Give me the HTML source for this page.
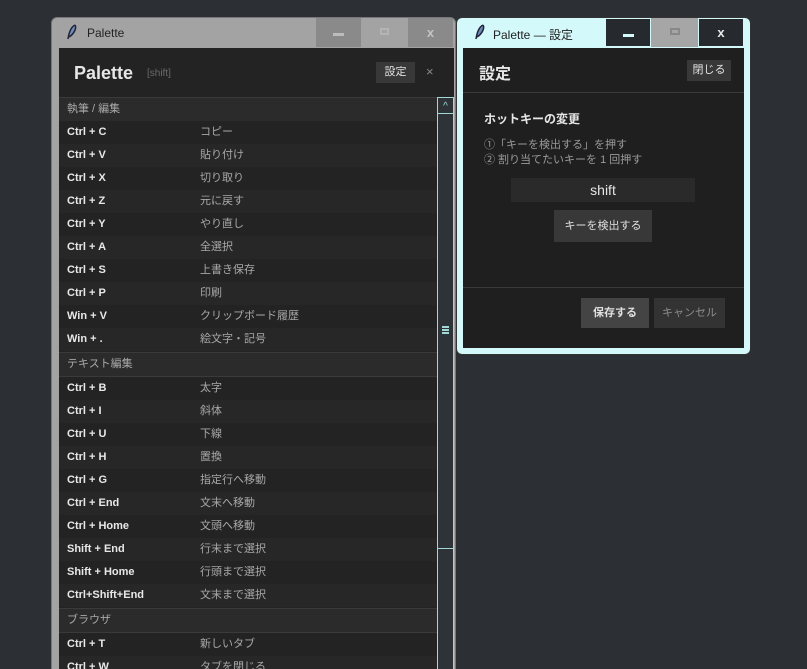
<!DOCTYPE html>
<html style="width:807px;height:669px;overflow:hidden"><head><meta charset="utf-8"><style>
*{box-sizing:border-box;margin:0;padding:0}
body{width:807px;height:669px;background:#2c3035;font-family:"Liberation Sans","Noto Sans CJK JP",sans-serif;position:relative;overflow:hidden}
.abs{position:absolute}
#lw{left:51px;top:17px;width:405px;height:660px;background:#a3a3a3;border:1px solid #777;border-radius:6px 6px 0 0;overflow:hidden}
.title{font-size:12px;color:#222;top:8px}
#lc{left:7px;top:30px;width:395px;height:640px;background:#232323}
.row{position:absolute;left:0;width:378px;height:23px;font-size:11px;line-height:23px}
.row .k{position:absolute;left:8px;color:#e8e8e8;font-weight:bold}
.row .d{position:absolute;left:141px;color:#a8a8a8}
.sec{position:absolute;left:0;width:378px;height:25px;background:#2b2b2b;border-top:1px solid #3a3a3a;border-bottom:1px solid #3a3a3a;font-size:11px;line-height:23px;color:#a8a8a8;padding-left:8px}
#rw{left:456px;top:17px;width:295px;height:338px;background:#d4f9fb;border-radius:6px;border:1px solid #333}
#rc{left:6px;top:30px;width:281px;height:300px;background:#1f1f1f}
.btn{position:absolute;background:#383838;color:#e0e0e0;font-size:11px;text-align:center}
</style></head><body>
<div id="lw" class="abs">
 <svg class="abs" style="left:14px;top:6px" width="12" height="17" viewBox="0 0 12 17"><path d="M9 1C5 3 3 8 2 15M9 1C11 4 8 10 3 13" stroke="#223" stroke-width="1.5" fill="#6a8cc0"/></svg>
 <div class="abs title" style="left:35px">Palette</div>
 <div class="abs" style="left:264px;top:0;width:45px;height:29px;background:#8a8a8a"><div class="abs" style="left:17px;top:15px;width:11px;height:3px;background:#bcbcbc"></div></div>
 <div class="abs" style="left:328px;top:10px;width:9px;height:7px;border:2px solid #b4b4b4"></div>
 <div class="abs" style="left:356px;top:0;width:45px;height:29px;background:#8a8a8a;color:#c4c4c4;font-weight:bold;font-size:13px;text-align:center;line-height:29px">x</div>
 <div id="lc" class="abs">
  <div class="abs" style="left:15px;top:15px;font-size:18px;font-weight:bold;color:#e6e6e6">Palette</div>
  <div class="abs" style="left:88px;top:20px;font-size:10px;color:#6a6a6a">[shift]</div>
  <div class="btn" style="left:317px;top:14px;width:39px;height:21px;line-height:21px">設定</div>
  <div class="abs" style="left:367px;top:16px;font-size:13px;color:#888">×</div>
  <div class="sec" style="top:49px">執筆 / 編集</div>
  <div class="row" style="top:73px;background:#232323"><span class="k">Ctrl + C</span><span class="d">コピー</span></div>
  <div class="row" style="top:96px;background:#272727"><span class="k">Ctrl + V</span><span class="d">貼り付け</span></div>
  <div class="row" style="top:119px;background:#232323"><span class="k">Ctrl + X</span><span class="d">切り取り</span></div>
  <div class="row" style="top:142px;background:#272727"><span class="k">Ctrl + Z</span><span class="d">元に戻す</span></div>
  <div class="row" style="top:165px;background:#232323"><span class="k">Ctrl + Y</span><span class="d">やり直し</span></div>
  <div class="row" style="top:188px;background:#272727"><span class="k">Ctrl + A</span><span class="d">全選択</span></div>
  <div class="row" style="top:211px;background:#232323"><span class="k">Ctrl + S</span><span class="d">上書き保存</span></div>
  <div class="row" style="top:234px;background:#272727"><span class="k">Ctrl + P</span><span class="d">印刷</span></div>
  <div class="row" style="top:257px;background:#232323"><span class="k">Win + V</span><span class="d">クリップボード履歴</span></div>
  <div class="row" style="top:280px;background:#272727"><span class="k">Win + .</span><span class="d">絵文字・記号</span></div>
  <div class="sec" style="top:304px">テキスト編集</div>
  <div class="row" style="top:329px;background:#232323"><span class="k">Ctrl + B</span><span class="d">太字</span></div>
  <div class="row" style="top:352px;background:#272727"><span class="k">Ctrl + I</span><span class="d">斜体</span></div>
  <div class="row" style="top:375px;background:#232323"><span class="k">Ctrl + U</span><span class="d">下線</span></div>
  <div class="row" style="top:398px;background:#272727"><span class="k">Ctrl + H</span><span class="d">置換</span></div>
  <div class="row" style="top:421px;background:#232323"><span class="k">Ctrl + G</span><span class="d">指定行へ移動</span></div>
  <div class="row" style="top:444px;background:#272727"><span class="k">Ctrl + End</span><span class="d">文末へ移動</span></div>
  <div class="row" style="top:467px;background:#232323"><span class="k">Ctrl + Home</span><span class="d">文頭へ移動</span></div>
  <div class="row" style="top:490px;background:#272727"><span class="k">Shift + End</span><span class="d">行末まで選択</span></div>
  <div class="row" style="top:513px;background:#232323"><span class="k">Shift + Home</span><span class="d">行頭まで選択</span></div>
  <div class="row" style="top:536px;background:#272727"><span class="k">Ctrl+Shift+End</span><span class="d">文末まで選択</span></div>
  <div class="sec" style="top:560px">ブラウザ</div>
  <div class="row" style="top:585px;background:#232323"><span class="k">Ctrl + T</span><span class="d">新しいタブ</span></div>
  <div class="row" style="top:608px;background:#272727"><span class="k">Ctrl + W</span><span class="d">タブを閉じる</span></div>
  <div class="abs" style="left:378px;top:49px;width:17px;height:600px;background:#2e3338;border:1px solid #9fd8d4">
   <div class="abs" style="left:0;top:0;width:15px;height:16px;border-bottom:1px solid #9fd8d4;color:#9fd8d4;font-size:10px;text-align:center;line-height:18px">^</div>
   <div class="abs" style="left:4px;top:228px;width:7px;height:2px;background:#9fd8d4;box-shadow:0 3px #9fd8d4,0 6px #9fd8d4"></div>
   <div class="abs" style="left:0;top:450px;width:15px;height:1px;background:#9fd8d4"></div>
  </div>
 </div>
</div>
<div id="rw" class="abs">
 <svg class="abs" style="left:17px;top:6px" width="12" height="17" viewBox="0 0 12 17"><path d="M9 1C5 3 3 8 2 15M9 1C11 4 8 10 3 13" stroke="#223" stroke-width="1.5" fill="#6a8cc0"/></svg>
 <div class="abs title" style="left:36px">Palette — 設定</div>
 <div class="abs" style="left:148px;top:0;width:46px;height:29px;background:#262a2e;border:1px solid #d4f9fb"><div class="abs" style="left:17px;top:15px;width:11px;height:3px;background:#d4f9fb"></div></div>
 <div class="abs" style="left:194px;top:0;width:47px;height:29px;background:#a6a6a6"><div class="abs" style="left:19px;top:10px;width:10px;height:7px;border:2px solid #888"></div></div>
 <div class="abs" style="left:241px;top:0;width:46px;height:29px;background:#262a2e;border:1px solid #d4f9fb;color:#e8e8e8;font-weight:bold;font-size:13px;text-align:center;line-height:27px">x</div>
 <div id="rc" class="abs">
  <div class="abs" style="left:16px;top:12px;font-size:16px;font-weight:bold;color:#e6e6e6">設定</div>
  <div class="btn" style="left:224px;top:12px;width:44px;height:21px;line-height:21px">閉じる</div>
  <div class="abs" style="left:0;top:44px;width:281px;height:1px;background:#3a3a3a"></div>
  <div class="abs" style="left:21px;top:62px;font-size:12px;font-weight:bold;color:#e6e6e6">ホットキーの変更</div>
  <div class="abs" style="left:21px;top:90px;font-size:11px;color:#9a9a9a;line-height:15px">①「キーを検出する」を押す<br>② 割り当てたいキーを 1 回押す</div>
  <div class="abs" style="left:48px;top:130px;width:184px;height:24px;background:#2a2a2a;color:#e6e6e6;font-size:14px;text-align:center;line-height:24px">shift</div>
  <div class="btn" style="left:91px;top:162px;width:98px;height:32px;line-height:32px">キーを検出する</div>
  <div class="abs" style="left:0;top:239px;width:281px;height:1px;background:#3a3a3a"></div>
  <div class="btn" style="left:118px;top:250px;width:68px;height:30px;line-height:30px;background:#444;font-weight:bold">保存する</div>
  <div class="btn" style="left:191px;top:250px;width:71px;height:30px;line-height:30px;background:#333;color:#8c8c8c">キャンセル</div>
 </div>
</div>
</body></html>
